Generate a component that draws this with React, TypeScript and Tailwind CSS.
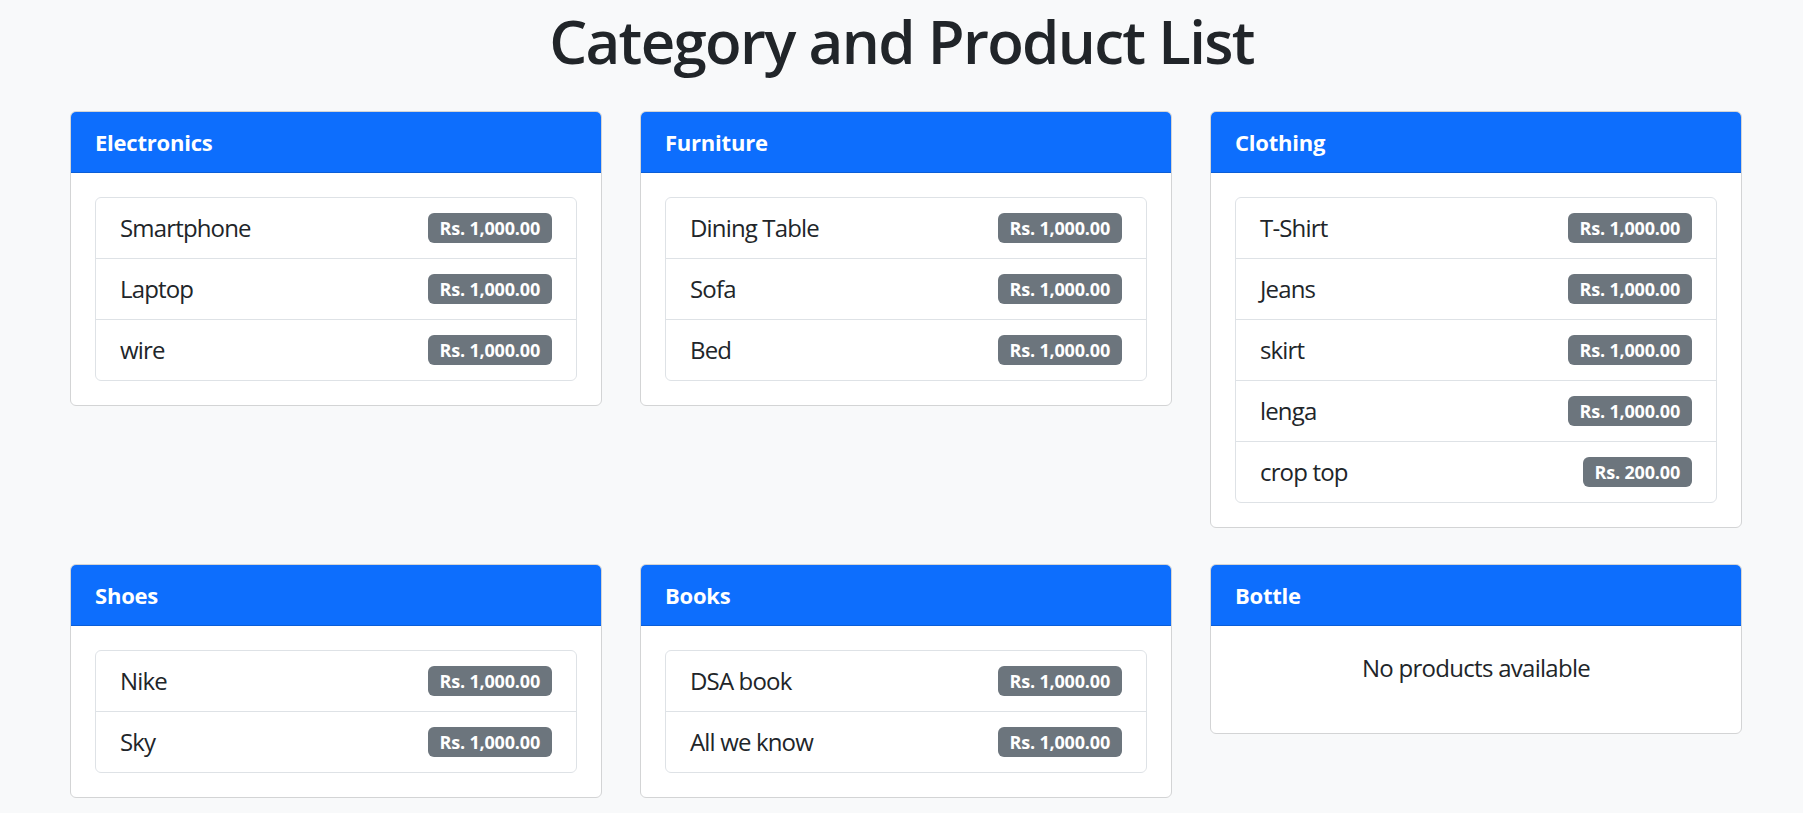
import React from "react";

type Product = { name: string; price: string };
type Category = { name: string; products: Product[] };

const k = "Rs. 1,000.00";
const row1: Category[] = [
  { name: "Electronics", products: [{ name: "Smartphone", price: k }, { name: "Laptop", price: k }, { name: "wire", price: k }] },
  { name: "Furniture", products: [{ name: "Dining Table", price: k }, { name: "Sofa", price: k }, { name: "Bed", price: k }] },
  {
    name: "Clothing",
    products: [
      { name: "T-Shirt", price: k },
      { name: "Jeans", price: k },
      { name: "skirt", price: k },
      { name: "lenga", price: k },
      { name: "crop top", price: "Rs. 200.00" },
    ],
  },
];
const row2: Category[] = [
  { name: "Shoes", products: [{ name: "Nike", price: k }, { name: "Sky", price: k }] },
  { name: "Books", products: [{ name: "DSA book", price: k }, { name: "All we know", price: k }] },
  { name: "Bottle", products: [] },
];

function Card({ c }: { c: Category }) {
  return (
    <div className="bg-white border border-[#d3d4d5] rounded-[6px] overflow-hidden">
      <div className="h-[61px] bg-[#0d6efd] border-b border-[#0b5ed7] flex items-center px-6">
        <h5 className="text-white font-bold text-[22px] leading-[26px] tracking-[-0.01em]">{c.name}</h5>
      </div>
      <div className="p-6">
        {c.products.length === 0 ? (
          <p className="text-center text-[24px] leading-[36px] pb-[23px] tracking-[-0.03em]">No products available</p>
        ) : (
          <ul className="border border-[#dee2e6] rounded-[6px] divide-y divide-[#dee2e6]">
            {c.products.map((p) => (
              <li key={p.name} className="h-[60px] flex items-center justify-between px-6 box-content">
                <span className="text-[24px] leading-[36px] tracking-[-0.035em]">{p.name}</span>
                <span className="bg-[#6c757d] text-white font-bold text-[18px] leading-[18px] px-[12px] py-[6px] rounded-[6px] tracking-[-0.01em]">
                  {p.price}
                </span>
              </li>
            ))}
          </ul>
        )}
      </div>
    </div>
  );
}

export default function App() {
  return (
    <div
      className="min-h-screen bg-[#f8f9fa] text-[#212529] pt-[4px] pb-6"
      style={{ fontFamily: '"Open Sans", "Noto Sans", sans-serif' }}
    >
      <h1 className="text-center font-semibold text-[60px] leading-[74px] tracking-[-0.028em] mb-[33px]">Category and Product List</h1>
      <div className="ml-[70px] w-[1672px] grid grid-cols-3 gap-x-[38px] gap-y-[36px] items-start">
        {row1.map((c) => (
          <Card key={c.name} c={c} />
        ))}
        {row2.map((c) => (
          <Card key={c.name} c={c} />
        ))}
      </div>
    </div>
  );
}
